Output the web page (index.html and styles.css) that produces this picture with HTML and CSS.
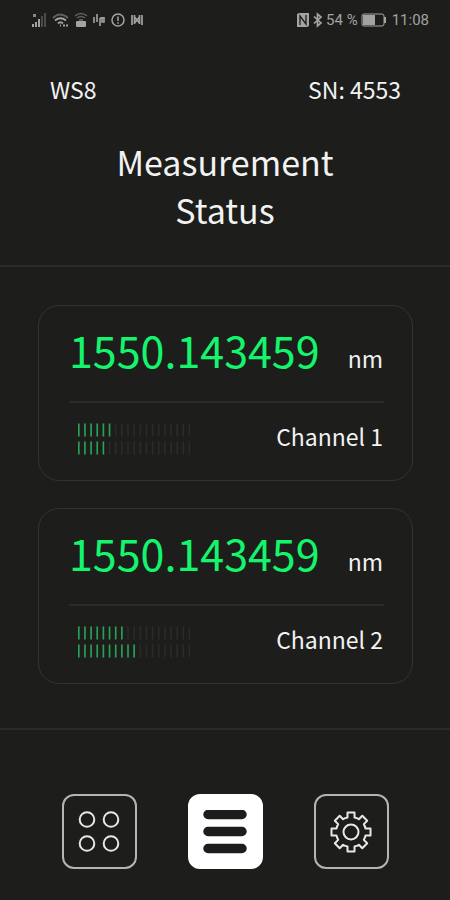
FILE: index.html
```html
<!DOCTYPE html>
<html lang="en">
  <head>
    <title>Measurement Status</title>
    <meta charset="UTF-8">
    <meta name="viewport" content="width=device-width, initial-scale=1">
    <link rel="stylesheet" href="styles.css">
  </head>
  <body>
    <div class="statusbar">
      <div class="icons">
        <svg width="17" height="16" viewBox="0 0 17 16" fill="currentColor">
          <path d="M1 12h2v3H1zM4 10h2v5H4zM7 7h2v8H7z"/>
          <path d="M10 4h2v11h-2zM13 1h2v14h-2z" opacity=".35"/>
          <path d="M2 2h3v3H2z" opacity=".8"/>
        </svg>
        <svg width="18" height="16" viewBox="0 0 18 16" fill="none" stroke="currentColor" stroke-width="1.8">
          <path d="M1 6Q8 -1 16 6" opacity=".5"/>
          <path d="M3 8.500Q8.500 4 14 8.500M6 11.500Q8.500 9 11 11.500"/>
          <path d="M8 13.500h1M11 13.500h2M14 13.500h2"/>
        </svg>
        <svg width="14" height="16" viewBox="0 0 14 16" fill="none" stroke="currentColor" stroke-width="1.500">
          <path d="M1 4Q7 -1 13 4M3 6Q7 3 11 6" opacity=".5"/>
          <rect x="2" y="9" width="10" height="6" rx="1" fill="currentColor" stroke="none"/>
          <path d="M5 8h4" opacity=".6"/>
        </svg>
        <svg width="14" height="16" viewBox="0 0 14 16" fill="none" stroke="currentColor" stroke-width="1.600">
          <path d="M2 5v6M5 2v8M8 6v8M10 5v5h2V5M8 6h4"/>
        </svg>
        <svg width="16" height="16" viewBox="0 0 16 16" fill="none" stroke="currentColor" stroke-width="1.500">
          <circle cx="8" cy="8" r="6"/>
          <path d="M8 4.500v4.500M8 10.300v1.500"/>
        </svg>
        <svg width="14" height="16" viewBox="0 0 14 16" fill="none" stroke="currentColor" stroke-width="1.700">
          <path d="M2 3v10M12 3v10M4.500 3v9M9.500 3v9M4.500 5L7 8l2.500-3M4.500 11L7 8l2.500 3"/>
        </svg>
      </div>
      <div class="info">
        <svg width="14" height="16" viewBox="0 0 14 16">
          <path fill="currentColor" d="M1 2l2-1h10v13l-2 1H1z"/>
          <path fill="none" stroke="#1d1d1b" stroke-width="1.300" d="M4 13V4l6 8V3"/>
        </svg>
        <svg width="12" height="16" viewBox="0 0 12 16" fill="none" stroke="currentColor" stroke-width="1.700">
          <path d="M2 4.500l7 6.500-3.500 3V2L9 5l-7 6.500"/>
        </svg>
        <span>54 %</span>
        <svg class="battery" width="26" height="16" viewBox="0 0 26 16">
          <rect x="1" y="2" width="22" height="12" rx="2" fill="none" stroke="currentColor"/>
          <rect x="2" y="3" width="12" height="10" fill="currentColor"/>
          <path d="M23 5h2v6h-2z" fill="currentColor"/>
        </svg>
        <span>11:08</span>
      </div>
    </div>

    <header>
      <div class="device">
        <span>WS8</span>
        <span>SN: 4553</span>
      </div>
      <h1>Measurement<br>Status</h1>
    </header>

    <main>
      <section class="card">
        <div class="reading">
          <span class="value">1550.143459</span>
          <span>nm</span>
        </div>
        <div class="channel">
          <svg class="level" width="112" height="32" viewBox="0 0 112 32" role="img" aria-label="Signal level">
            <path class="off" d="M0 7H112M0 25H112"/>
            <path class="on" d="M0 7H34M0 25H28"/>
          </svg>
          <h2>Channel 1</h2>
        </div>
      </section>

      <section class="card">
        <div class="reading">
          <span class="value">1550.143459</span>
          <span>nm</span>
        </div>
        <div class="channel">
          <svg class="level" width="112" height="32" viewBox="0 0 112 32" role="img" aria-label="Signal level">
            <path class="off" d="M0 7H112M0 25H112"/>
            <path class="on" d="M0 7H46M0 25H59"/>
          </svg>
          <h2>Channel 2</h2>
        </div>
      </section>
    </main>

    <nav>
      <button aria-label="Overview">
        <svg width="44" height="44" viewBox="0 0 44 44" fill="none" stroke="currentColor" stroke-width="2">
          <circle cx="10" cy="9.500" r="7.300"/>
          <circle cx="34" cy="9.500" r="7.300"/>
          <circle cx="10" cy="33.500" r="7.300"/>
          <circle cx="34" cy="33.500" r="7.300"/>
        </svg>
      </button>
      <button class="active" aria-label="Measurements">
        <svg width="44" height="44" viewBox="0 0 44 44" stroke="currentColor" stroke-width="9.500" stroke-linecap="round">
          <path d="M5 4.500H39M5 21.500H39M5 38.500H39"/>
        </svg>
      </button>
      <button aria-label="Settings">
        <svg width="44" height="44" viewBox="-22 -22 44 44" fill="none" stroke="currentColor" stroke-width="2" stroke-linejoin="round">
          <circle r="7.500"/>
          <path d="M-3.500-19.500H3.500V-14.500Q6-14 7.900-12.800L11.300-16.200L16.200-11.300L12.800-7.900Q14-6 14.500-3.500H19.500V3.500H14.500Q14 6 12.800 7.900L16.200 11.300L11.300 16.200L7.900 12.800Q6 14 3.500 14.500V19.500H-3.500V14.500Q-6 14-7.900 12.800L-11.300 16.200L-16.200 11.300L-12.800 7.900Q-14 6-14.500 3.500H-19.500V-3.500H-14.500Q-14-6-12.800-7.900L-16.200-11.300L-11.300-16.200L-7.900-12.800Q-6-14-3.500-14.500Z"/>
        </svg>
      </button>
    </nav>
  </body>
</html>
```

FILE: styles.css
```css
* {
  box-sizing: border-box;
}
body {
  margin: 0;
  min-height: 100vh;
  display: flex;
  flex-direction: column;
  background-color: #1d1d1b;
  color: #f2f2f2;
  font-family: 'Noto Sans CJK SC', 'Open Sans', sans-serif;
  font-size: 23px;
  line-height: 32px;
}
svg {
  display: block;
  flex: none;
}
.statusbar {
  height: 40px;
  padding: 0 21px 0 31px;
  display: flex;
  align-items: center;
  justify-content: space-between;
  color: #a3a3a1;
  font-family: Roboto, sans-serif;
  font-size: 15px;
  line-height: 20px;
}
.icons {
  display: flex;
  gap: 4px;
}
.info {
  display: flex;
  align-items: center;
  gap: 2px;
}
.battery {
  margin: 0 3px 0 1px;
}
header {
  padding: 33px 0 31px;
  border-bottom: 2px solid #2b2b2a;
}
.device {
  display: flex;
  justify-content: space-between;
  padding: 0 49px 0 50px;
}
h1 {
  margin: 33px 0 0;
  font-size: 34px;
  font-weight: normal;
  line-height: 48px;
  text-align: center;
}
main {
  display: flex;
  flex-direction: column;
  gap: 27px;
  padding: 38px 37px 44px 38px;
}
.card {
  border: 1px solid #333332;
  border-radius: 21px;
  padding: 16px 28px 25px 30px;
}
.reading {
  display: flex;
  align-items: baseline;
  justify-content: space-between;
  padding: 0 1px 25px 0;
  border-bottom: 2px solid #2b2b2a;
}
.value {
  color: #14f46c;
  font-size: 43px;
  line-height: 54px;
}
.channel {
  display: flex;
  align-items: flex-start;
  justify-content: space-between;
  padding: 20px 1px 0 9px;
}
h2 {
  margin: 0;
  font-size: 23px;
  font-weight: normal;
  line-height: 26px;
}
.level path {
  fill: none;
  stroke-width: 13;
  stroke-dasharray: 1.6 4.55;
}
.level .off {
  stroke: #2b2b2a;
}
.level .on {
  stroke: #27a358;
}
nav {
  display: flex;
  justify-content: center;
  gap: 51px;
  padding: 64px 0 30px;
  border-top: 2px solid #2b2b2a;
}
button {
  width: 75px;
  height: 75px;
  display: flex;
  align-items: center;
  justify-content: center;
  padding: 0;
  background: none;
  border: 2px solid #b4b4b2;
  border-radius: 12px;
  color: #e8e8e6;
  cursor: pointer;
}
button.active {
  background-color: white;
  border-color: white;
  color: #1d1d1b;
}
```
